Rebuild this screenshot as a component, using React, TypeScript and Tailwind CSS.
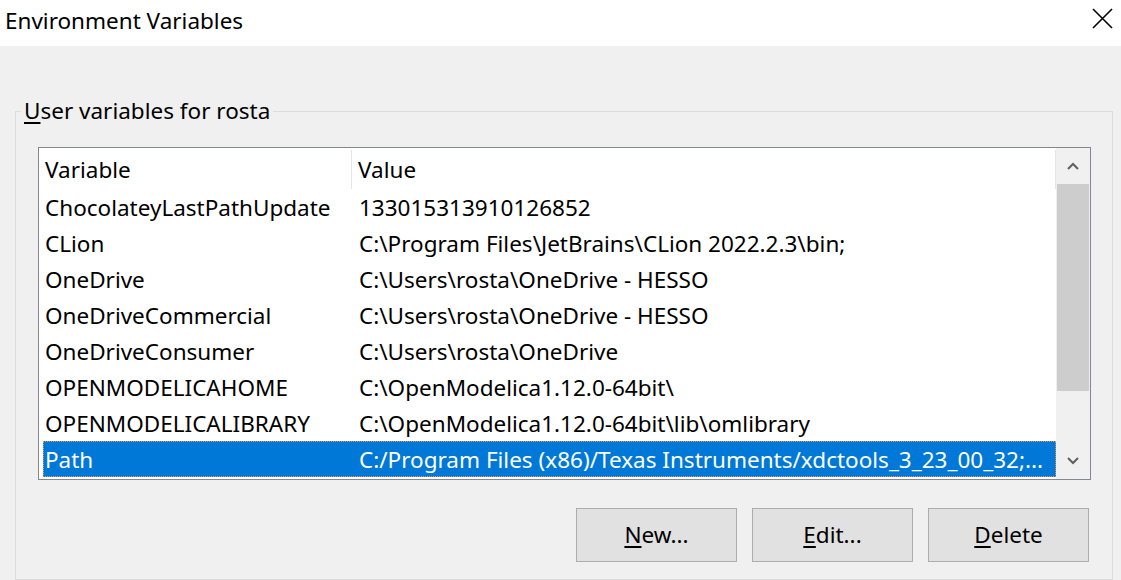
import React from 'react'

const rows = [
  { name: 'ChocolateyLastPathUpdate', value: '133015313910126852' },
  { name: 'CLion', value: 'C:\\Program Files\\JetBrains\\CLion 2022.2.3\\bin;' },
  { name: 'OneDrive', value: 'C:\\Users\\rosta\\OneDrive - HESSO' },
  { name: 'OneDriveCommercial', value: 'C:\\Users\\rosta\\OneDrive - HESSO' },
  { name: 'OneDriveConsumer', value: 'C:\\Users\\rosta\\OneDrive' },
  { name: 'OPENMODELICAHOME', value: 'C:\\OpenModelica1.12.0-64bit\\' },
  { name: 'OPENMODELICALIBRARY', value: 'C:\\OpenModelica1.12.0-64bit\\lib\\omlibrary' },
  { name: 'Path', value: 'C:/Program Files (x86)/Texas Instruments/xdctools_3_23_00_32;...' },
]

function DlgButton({ hot, rest }: { hot: string; rest: string }) {
  return (
    <button className="w-[161px] h-[54px] bg-[#e1e1e1] border border-[#adadad] text-[22.5px] text-black">
      <span className="underline underline-offset-[3px]">{hot}</span>
      {rest}
    </button>
  )
}

export default function App() {
  return (
    <div
      className="w-[1121px] h-[580px] overflow-hidden flex flex-col bg-[#f0f0f0] text-black"
      style={{ fontFamily: '"Noto Sans", "Open Sans", sans-serif' }}
    >
      {/* Title bar */}
      <div className="h-[46px] bg-white flex items-center justify-between pl-[5px] pr-[8px] shrink-0">
        <span className="text-[22.5px] leading-none mb-[4px]">Environment Variables</span>
        <svg width="21" height="21" viewBox="0 0 21 21" className="text-black mb-[9px]">
          <path d="M1 1 L20 20 M20 1 L1 20" stroke="currentColor" strokeWidth="1.6" fill="none" />
        </svg>
      </div>

      {/* Group box */}
      <fieldset className="ml-[15px] mt-[50px] w-[1098px] h-[600px] border border-[#dcdcdc] p-0 min-w-0">
        <legend className="ml-[5px] px-[3px] text-[22.5px] leading-[30px]">
          <span className="underline underline-offset-[3px]">U</span>ser variables for rosta
        </legend>

        <div className="ml-[22px] mt-[21px] w-[1053px] h-[333px] border border-[#828790] bg-white flex">
          {/* list */}
          <div className="flex-1 flex flex-col pl-[4px]">
            <div className="h-[41px] pt-[2px] flex items-center text-[22.5px] shrink-0">
              <div className="w-[309px] h-full flex items-center pl-[2px] border-r border-[#e5e5e5]">Variable</div>
              <div className="flex-1 h-full flex items-center pl-[6px] border-r border-[#e5e5e5]">Value</div>
            </div>
            {rows.map((r, i) => {
              const sel = i === rows.length - 1
              return (
                <div
                  key={r.name}
                  className={
                    'h-[36px] pt-[1px] flex items-center text-[22.5px] whitespace-nowrap ' +
                    (sel ? 'bg-[#0078d7] text-white border border-dotted border-[#e8964a]' : '')
                  }
                >
                  <div className={'w-[309px] ' + (sel ? 'pl-[1px]' : 'pl-[2px]')}>{r.name}</div>
                  <div className={'flex-1 overflow-hidden ' + (sel ? 'pl-[6px]' : 'pl-[7px]')}>{r.value}</div>
                </div>
              )
            })}
          </div>

          {/* scrollbar */}
          <div className="w-[34px] bg-[#f0f0f0] flex flex-col">
            <div className="h-[36px] flex items-center justify-center">
              <svg width="12" height="8" viewBox="0 0 12 8">
                <path d="M1 7 L6 2 L11 7" stroke="#606060" strokeWidth="2" fill="none" />
              </svg>
            </div>
            <div className="mx-[1px] h-[207px] bg-[#cdcdcd]" />
            <div className="flex-1" />
            <div className="h-[36px] flex items-center justify-center">
              <svg width="12" height="8" viewBox="0 0 12 8">
                <path d="M1 1 L6 6 L11 1" stroke="#606060" strokeWidth="2" fill="none" />
              </svg>
            </div>
          </div>
        </div>

        <div className="mt-[28px] w-[1073px] flex justify-end gap-[15px]">
          <DlgButton hot="N" rest="ew..." />
          <DlgButton hot="E" rest="dit..." />
          <DlgButton hot="D" rest="elete" />
        </div>
      </fieldset>
    </div>
  )
}
